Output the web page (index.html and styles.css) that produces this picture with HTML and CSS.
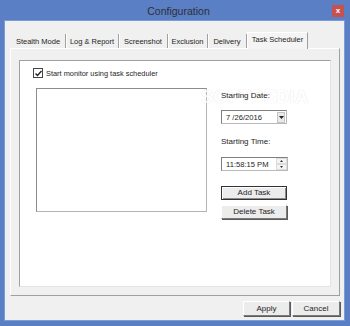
FILE: index.html
```html
<!DOCTYPE html>
<html lang="en">
<head>
    <meta charset="UTF-8">
    <title>Configuration</title>
    <link rel="stylesheet" href="styles.css">
</head>
<body>
    <div class="window">
        <div class="titlebar">
            <span class="title">Configuration</span>
            <span class="close">x</span>
        </div>
        <div class="client">
            <div class="tabs">
                <div class="tab">Stealth Mode</div>
                <div class="tab">Log &amp; Report</div>
                <div class="tab">Screenshot</div>
                <div class="tab">Exclusion</div>
                <div class="tab">Delivery</div>
                <div class="tab active">Task Scheduler</div>
            </div>
            <div class="page">
                <div class="panel">
                    <div class="check">
                        <span class="box">
                            <svg width="7" height="7" viewBox="0 0 7 7"><path d="M0.5 3.5 L2.5 5.5 L6.5 1" fill="none" stroke="#222" stroke-width="1.4"/></svg>
                        </span>
                        <span>Start monitor using task scheduler</span>
                    </div>
                    <div class="body">
                        <div class="list"></div>
                        <div class="side">
                            <div class="label">Starting Date:</div>
                            <div class="field date">
                                <span class="value">7 /26/2016</span>
                                <span class="drop">
                                    <svg width="5" height="3" viewBox="0 0 5 3"><path d="M0 0 H5 L2.5 3 Z" fill="#222"/></svg>
                                </span>
                            </div>
                            <div class="label second">Starting Time:</div>
                            <div class="field time">
                                <span class="value">11:58:15 PM</span>
                                <span class="spin">
                                    <span class="arrow"><svg width="3" height="2" viewBox="0 0 3 2"><path d="M0 2 H3 L1.5 0 Z" fill="#333"/></svg></span>
                                    <span class="arrow"><svg width="3" height="2" viewBox="0 0 3 2"><path d="M0 0 H3 L1.5 2 Z" fill="#333"/></svg></span>
                                </span>
                            </div>
                            <div class="btn task default">Add Task</div>
                            <div class="btn task delete">Delete Task</div>
                        </div>
                    </div>
                </div>
            </div>
            <div class="footer">
                <div class="btn foot">Apply</div>
                <div class="btn foot">Cancel</div>
            </div>
        </div>
        <div class="watermark">SOFTPEDIA</div>
    </div>
</body>
</html>
```

FILE: styles.css
```css
body {
    margin: 0;
    font-family: "Liberation Sans", Arial, sans-serif;
    color: #1e1e1e;
}
.window {
    position: relative;
    width: 350px;
    height: 326px;
    box-sizing: border-box;
    background-color: #5b7fc4; /* Win8 blue frame */
    padding: 0 6px 6px 5px;
    display: flex;
    flex-direction: column;
}
.titlebar {
    height: 21px;
    display: flex;
    align-items: center;
}
.title {
    flex: 1;
    text-align: center;
    padding-left: 20px;
    font-size: 10.5px;
    color: #2b2f3a;
}
.close {
    width: 12px;
    height: 12px;
    background-color: #c75050;
    color: #fff;
    font-size: 8px;
    font-weight: bold;
    line-height: 11px;
    text-align: center;
}
.client {
    flex: 1;
    background-color: #f0f0f0;
    padding: 11px 4px 0 5px;
    display: flex;
    flex-direction: column;
    box-shadow: 0 0 0 1px #7d9bd6;
}
.tabs {
    height: 16px;
    display: flex;
    align-items: flex-end;
    padding-left: 1px;
}
.tab {
    height: 14px;
    box-sizing: border-box;
    font-size: 7.5px;
    line-height: 15px;
    text-align: center;
    border-right: 1px solid #a0a0a0;
    box-shadow: 1px 0 0 #fff;
    white-space: nowrap;
}
/* widths of the tabs as drawn by the original control */
.tab:nth-child(1) { width: 55px; }
.tab:nth-child(2) { width: 53px; }
.tab:nth-child(3) { width: 49px; }
.tab:nth-child(4) { width: 40px; }
.tab:nth-child(5) { width: 39px; }
.tab.active {
    width: 61px;
    height: 17px;
    margin-bottom: -1px;
    position: relative;
    background-color: #f4f4f4;
    border-top: 1px solid #fff;
    border-left: 1px solid #fff;
    line-height: 14px;
    box-shadow: none;
}
.page {
    height: 248px;
    box-sizing: border-box;
    border: 1px solid #a0a0a0;
    border-top-color: #fff;
    border-left-color: #fff;
    padding: 11px 8px 8px 8px;
    display: flex;
    flex-direction: column;
}
.panel {
    flex: 1;
    background-color: #fff;
    border: 1px solid #e3e3e3;
    border-top-color: #a0a0a0;
    border-left-color: #a0a0a0;
    padding: 7px 0 0 13px;
}
.check {
    height: 10px;
    display: flex;
    align-items: center;
    gap: 3px;
    font-size: 7.4px;
}
.box {
    width: 10px;
    height: 10px;
    box-sizing: border-box;
    border: 1px solid #444;
    background-color: #fff;
    display: flex;
    align-items: center;
    justify-content: center;
}
.body {
    display: flex;
    margin-top: 10px;
    padding-left: 3px;
}
.list {
    width: 171px;
    height: 124px;
    box-sizing: border-box;
    border: 1px solid #b4b4b4;
    border-top-color: #8c8c8c;
    border-left-color: #8c8c8c;
}
.side {
    margin-left: 14px;
    padding-top: 3px;
    width: 67px;
    display: flex;
    flex-direction: column;
    position: relative;
    z-index: 1;
}
.label {
    height: 10px;
    line-height: 10px;
    font-size: 8px;
}
.label.second {
    margin-top: 13px;
}
.field {
    height: 14px;
    box-sizing: border-box;
    border: 1px solid #b9b9b9;
    border-top-color: #7f7f7f;
    border-left-color: #7f7f7f;
    display: flex;
    align-items: center;
    font-size: 7.6px;
}
.field .value {
    flex: 1;
    padding-left: 4px;
}
.field.date {
    margin-top: 9px;
    width: 66px;
}
.field.time {
    margin-top: 10px;
}
.drop {
    width: 8px;
    height: 11px;
    margin-right: 1px;
    background-color: #e9e9e9;
    border: 1px solid #c4c4c4;
    box-sizing: border-box;
    display: flex;
    align-items: center;
    justify-content: center;
}
.spin {
    width: 11px;
    height: 12px;
    display: flex;
    flex-direction: column;
}
.arrow {
    flex: 1;
    display: flex;
    align-items: center;
    justify-content: center;
    border: 1px solid #dcdcdc;
    background-color: #f4f4f4;
}
.btn {
    box-sizing: border-box;
    text-align: center;
    font-size: 8px;
    background-color: #ececec;
    border: 1px solid #7a7a7a;
    border-top-color: #fff;
    border-left-color: #fff;
    box-shadow: 1px 1px 0 #5a5a5a;
}
.btn.task {
    height: 14px;
    line-height: 12px;
    width: 66px;
}
.btn.default {
    margin-top: 15px;
    border: 1px solid #333;
    box-shadow: inset 1px 1px 0 #fff, inset -1px -1px 0 #8a8a8a;
}
.btn.delete {
    margin-top: 5px;
}
.footer {
    display: flex;
    justify-content: flex-end;
    gap: 2px;
    padding-top: 5px;
}
.btn.foot {
    width: 47px;
    height: 15px;
    line-height: 13px;
}
.btn.foot:last-child {
    width: 48px;
}
.watermark {
    position: absolute;
    left: 201px;
    top: 87px;
    font-size: 18px;
    font-weight: bold;
    letter-spacing: 0.5px;
    color: #fff;
    text-shadow: 0 0 1px #dedede, 0 0 1px #dedede;
    opacity: 0.7;
}
```
